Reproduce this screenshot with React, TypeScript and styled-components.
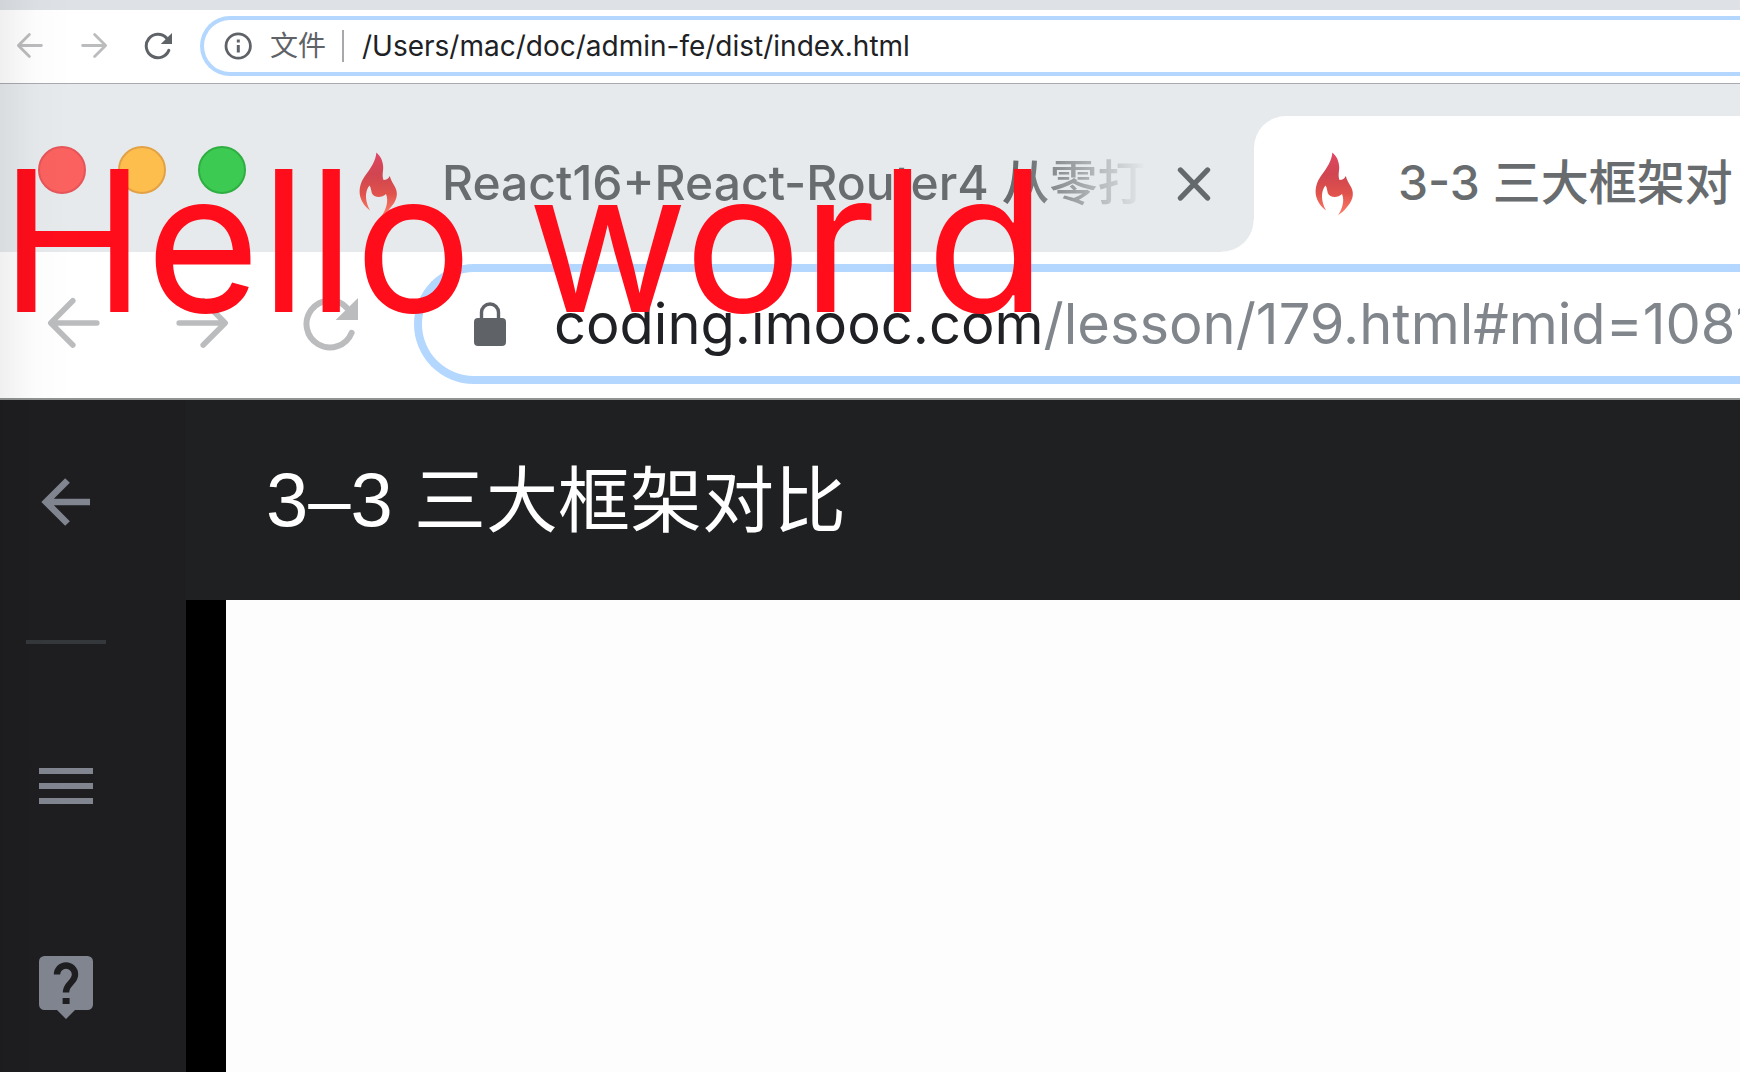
import React from "react";
import styled, { createGlobalStyle } from "styled-components";

const GlobalStyle = createGlobalStyle`
  *, *::before, *::after { box-sizing: border-box; }
  html, body { margin: 0; background: #fdfdfd; }
  body { font-family: Inter, "Noto Sans CJK SC", sans-serif; }
  button { border: 0; padding: 0; margin: 0; background: none; font: inherit; color: inherit; }
  svg { display: block; }
`;

const Screen = styled.div`
  position: relative;
  display: flex;
  flex-direction: column;
  min-height: 100vh;
  overflow: hidden;
`;

const WindowEdge = styled.div`
  flex: none;
  height: 10px;
  background: #dee1e5;
`;

const Toolbar = styled.div<{ $large?: boolean }>`
  display: flex;
  align-items: center;
  flex: none;
  background: #fff;
  height: ${(p) => (p.$large ? 148 : 74)}px;
  gap: ${(p) => (p.$large ? 72 : 36)}px;
  padding-left: ${(p) => (p.$large ? 46 : 16)}px;
  padding-bottom: ${(p) => (p.$large ? 2 : 1)}px;
  border-bottom: ${(p) => (p.$large ? "2px solid #919292" : "1px solid #a9aaae")};
`;

const NavButton = styled.button<{ $large?: boolean; $muted?: boolean }>`
  flex: none;
  width: ${(p) => (p.$large ? 56 : 28)}px;
  height: ${(p) => (p.$large ? 56 : 28)}px;
  color: ${(p) => (p.$muted ? "#bbbcbe" : "#5f6368")};
  svg { width: 100%; height: 100%; }
`;

const AddressBar = styled.div<{ $large?: boolean }>`
  flex: 1;
  min-width: 0;
  display: flex;
  align-items: center;
  overflow: hidden;
  color: #202124;
  border-style: solid;
  border-color: #b3d7ff;
  height: ${(p) => (p.$large ? 120 : 60)}px;
  margin-left: ${(p) => (p.$large ? -16 : -8)}px;
  padding-left: ${(p) => (p.$large ? 48 : 20)}px;
  gap: ${(p) => (p.$large ? 44 : 18)}px;
  border-width: ${(p) => (p.$large ? 8 : 4)}px;
  border-right-width: 0;
  border-radius: ${(p) => (p.$large ? 60 : 30)}px 0 0 ${(p) => (p.$large ? 60 : 30)}px;
  font-size: ${(p) => (p.$large ? 56 : 28)}px;
  svg { flex: none; }
`;

const SchemeLabel = styled.label`
  flex: none;
  padding-right: 16px;
  border-right: 2px solid #a6a8ab;
  line-height: 32px;
  color: #5f6368;
`;

const UrlInput = styled.input`
  flex: 1;
  min-width: 0;
  border: 0;
  outline: 0;
  padding: 0;
  background: transparent;
  color: #202124;
  font: inherit;
`;

const Url = styled.div`
  white-space: nowrap;
  line-height: 72px;
`;

const UrlPath = styled.span`
  color: #80868b;
`;

const Page = styled.main`
  position: relative;
  flex: 1;
  display: flex;
  flex-direction: column;
`;

const TabStrip = styled.div`
  display: flex;
  flex: none;
  height: 168px;
  padding-top: 32px;
  background: #e6eaec;
`;

const WindowControls = styled.div`
  display: flex;
  flex: none;
  gap: 32px;
  padding: 30px 0 0 38px;
`;

const WindowDot = styled.button<{ $fill: string; $rim: string }>`
  width: 48px;
  height: 48px;
  border-radius: 50%;
  background: ${(p) => p.$fill};
  border: 2px solid ${(p) => p.$rim};
`;

const Tab = styled.div<{ $active?: boolean }>`
  display: flex;
  align-items: center;
  height: 136px;
  color: #686c6f;
  font-size: 48px;
  font-weight: 500;
  line-height: 64px;
  flex: ${(p) => (p.$active ? "1" : "none")};
  min-width: 0;
  width: ${(p) => (p.$active ? "auto" : "1008px")};
  padding-left: ${(p) => (p.$active ? 61 : 113)}px;
  overflow: ${(p) => (p.$active ? "hidden" : "visible")};
  background: ${(p) => (p.$active ? "#fff" : "#e6eaec")};
  border-top-left-radius: ${(p) => (p.$active ? 32 : 0)}px;
`;

const TabJoin = styled.div`
  flex: none;
  align-self: flex-end;
  width: 32px;
  height: 32px;
  margin-left: -32px;
  background: radial-gradient(circle at 0 0, #e6eaec 31px, #fff 32px);
`;

const TabTitle = styled.span<{ $fade?: boolean }>`
  flex: 1;
  min-width: 0;
  margin-left: 43px;
  padding-bottom: 2px;
  white-space: nowrap;
  mask-image: ${(p) => (p.$fade ? "linear-gradient(to right, #000 580px, transparent 704px)" : "none")};
`;

const CloseButton = styled.button`
  flex: none;
  width: 36px;
  height: 36px;
  margin: 0 42px 0 32px;
`;

const Lesson = styled.div`
  flex: 1;
  display: grid;
  grid-template-columns: 186px 1fr;
`;

const SideNav = styled.nav`
  display: flex;
  flex-direction: column;
  align-items: flex-start;
  background: #1e1e21;
  color: #808590;
  padding: 74px 0 0 38px;
`;

const SideButton = styled.button`
  width: 56px;
  height: 56px;
`;

const SideRule = styled.hr`
  width: 80px;
  height: 4px;
  border: 0;
  margin: 110px 0 114px -12px;
  background: #35383b;
`;

const HelpButton = styled.button`
  width: 56px;
  height: 64px;
  margin-top: 142px;
`;

const LessonBody = styled.section`
  display: flex;
  flex-direction: column;
  background: #000;
`;

const LessonHeader = styled.header`
  flex: none;
  height: 200px;
  padding-left: 80px;
  background: #1f2022;
`;

const LessonTitle = styled.h2`
  margin: 0;
  color: #fff;
  font-family: "Liberation Sans", "Noto Sans CJK SC", sans-serif;
  font-size: 72px;
  font-weight: 400;
  line-height: 200px;
  white-space: nowrap;
`;

const LessonNumber = styled.span`
  font-size: 76px;
`;

const Stage = styled.div`
  flex: 1;
  margin-left: 40px;
  background: #fdfdfd;
`;

const Greeting = styled.h1`
  position: absolute;
  top: 37px;
  left: 0;
  margin: 0;
  color: #ff0d1b;
  font-size: 196px;
  font-weight: 400;
  line-height: 240px;
  white-space: nowrap;
  pointer-events: none;
`;

const EdgeShade = styled.div`
  position: absolute;
  inset: 0 auto 0 0;
  width: 72px;
  background: linear-gradient(to right, rgba(0, 0, 0, 0.06), rgba(0, 0, 0, 0.012) 50%, transparent);
  pointer-events: none;
`;

type NavProps = { large?: boolean; muted?: boolean };

const Back = ({ large, muted }: NavProps) => (
  <NavButton $large={large} $muted={muted} aria-label="Back">
    <svg viewBox="0 0 28 28" fill="none" stroke="currentColor" strokeWidth="2.8" strokeLinecap="round" strokeLinejoin="round">
      <path d="M13.4 2.4 2.4 13.5l11 11M2.6 13.5h22.8" />
    </svg>
  </NavButton>
);

const Forward = ({ large, muted }: NavProps) => (
  <NavButton $large={large} $muted={muted} aria-label="Forward">
    <svg viewBox="0 0 28 28" fill="none" stroke="currentColor" strokeWidth="2.8" strokeLinecap="round" strokeLinejoin="round">
      <path d="m14.6 2.4 11 11.1-11 11M25.4 13.5H2.6" />
    </svg>
  </NavButton>
);

const Reload = ({ large, muted }: NavProps) => (
  <NavButton $large={large} $muted={muted} aria-label="Reload">
    <svg viewBox="0 0 28 28" fill="none">
      <path d="M24.8 18.4A11.7 11.7 0 1 1 22.4 5.9" stroke="currentColor" strokeWidth="3" strokeLinecap="round" />
      <path d="M28 1v11H16.8z" fill="currentColor" />
    </svg>
  </NavButton>
);

const InfoIcon = () => (
  <svg width="28" height="28" viewBox="0 0 28 28" fill="none">
    <circle cx="14.2" cy="14" r="12.2" stroke="#5f6368" strokeWidth="2.8" />
    <path d="M12.8 7.6h3v3h-3zM12.8 13h3v7.6h-3z" fill="#5f6368" />
  </svg>
);

const LockIcon = () => (
  <svg width="40" height="48" viewBox="0 0 40 48" fill="none">
    <path d="M11.5 20v-7.5a8.5 8.5 0 0 1 17 0V20" stroke="#5f6368" strokeWidth="3.4" />
    <rect x="4" y="18" width="32" height="28" rx="4" fill="#5f6368" />
  </svg>
);

const Flame = ({ id }: { id: string }) => (
  <svg width="40" height="66" viewBox="0 0 40 66">
    <defs>
      <linearGradient id={id} x1="0" y1="0" x2="0" y2="1">
        <stop offset="0" stopColor="#e04764" />
        <stop offset="0.35" stopColor="#d04550" />
        <stop offset="0.65" stopColor="#df524c" />
        <stop offset="1" stopColor="#ff7d68" />
      </linearGradient>
    </defs>
    <path
      fill={`url(#${id})`}
      d="M17.4 1.500C21.500 5 24 10 24.200 16C24.300 20 22.800 24.500 24.500 29C27.500 29 29.500 27.500 30.800 25C31.800 29.500 34 32 36.300 36.500C40 44 36.500 51 32 56C29.500 59.500 26 62 23 64.500C27 58 30 50 27 43C22.500 47.500 14.500 46.500 12.800 42C12 39 12 36.500 10.400 34.500C5.500 41 6 50 11 59.500C4.500 54.500.5 47.500.6 40.500C.8 33 3.500 28.500 7 23.500C12 16.500 16.500 10.500 17.400 1.500Z"
    />
  </svg>
);

export default function App() {
  return (
    <>
      <GlobalStyle />
      <Screen>
        <WindowEdge />
        <Toolbar>
          <Back muted />
          <Forward muted />
          <Reload />
          <AddressBar>
            <InfoIcon />
            <SchemeLabel htmlFor="address">文件</SchemeLabel>
            <UrlInput id="address" type="text" defaultValue="/Users/mac/doc/admin-fe/dist/index.html" />
          </AddressBar>
        </Toolbar>

        <Page>
          <TabStrip>
            <WindowControls>
              <WindowDot $fill="#fb625f" $rim="#e6555a" aria-label="Close window" />
              <WindowDot $fill="#fdbe4e" $rim="#e3a145" aria-label="Minimize window" />
              <WindowDot $fill="#3dca53" $rim="#2fae42" aria-label="Zoom window" />
            </WindowControls>
            <Tab>
              <Flame id="flame-left" />
              <TabTitle $fade>React16+React-Router4 从零打</TabTitle>
              <CloseButton aria-label="Close tab">
                <svg width="36" height="36" viewBox="0 0 36 36" stroke="#64696c" strokeWidth="5.4" strokeLinecap="round">
                  <path d="m4.500 4 27 28M31.500 4l-27 28" />
                </svg>
              </CloseButton>
            </Tab>
            <TabJoin />
            <Tab $active>
              <Flame id="flame-right" />
              <TabTitle>3-3 三大框架对</TabTitle>
            </Tab>
          </TabStrip>

          <Toolbar $large>
            <Back large muted />
            <Forward large muted />
            <Reload large muted />
            <AddressBar $large>
              <LockIcon />
              <Url>
                coding.imooc.com<UrlPath>/lesson/179.html#mid=1081</UrlPath>
              </Url>
            </AddressBar>
          </Toolbar>

          <Lesson>
            <SideNav>
              <SideButton aria-label="Back to course">
                <svg width="56" height="56" viewBox="0 0 56 56" fill="none" stroke="currentColor" strokeWidth="6.6">
                  <path d="M29.500 6.500 8 28l21.500 21.500M8 28h44" />
                </svg>
              </SideButton>
              <SideRule />
              <SideButton aria-label="Chapters">
                <svg width="56" height="56" viewBox="0 0 56 56" fill="currentColor">
                  <path d="M1 10h54v6H1zM1 25h54v6H1zM1 40h54v6H1z" />
                </svg>
              </SideButton>
              <HelpButton aria-label="Questions">
                <svg width="56" height="64" viewBox="0 0 56 64" fill="none">
                  <path d="M6.500 0h43a5.500 5.500 0 0 1 5.500 5.500v43a5.500 5.500 0 0 1-5.500 5.500H37l-9 9-9-9H6.500a5.500 5.500 0 0 1-5.500-5.500v-43A5.500 5.500 0 0 1 6.500 0z" fill="currentColor" />
                  <path d="M19 18.500c0-5 4-9 9-9s9 4 9 9c0 8-9 9-9 18" stroke="#1e1e21" strokeWidth="6.400" />
                  <path d="M24.600 42h7v6h-7z" fill="#1e1e21" />
                </svg>
              </HelpButton>
            </SideNav>
            <LessonBody>
              <LessonHeader>
                <LessonTitle>
                  <LessonNumber>3–3 </LessonNumber>三大框架对比
                </LessonTitle>
              </LessonHeader>
              <Stage />
            </LessonBody>
          </Lesson>

          <Greeting>Hello world</Greeting>
        </Page>
        <EdgeShade />
      </Screen>
    </>
  );
}
